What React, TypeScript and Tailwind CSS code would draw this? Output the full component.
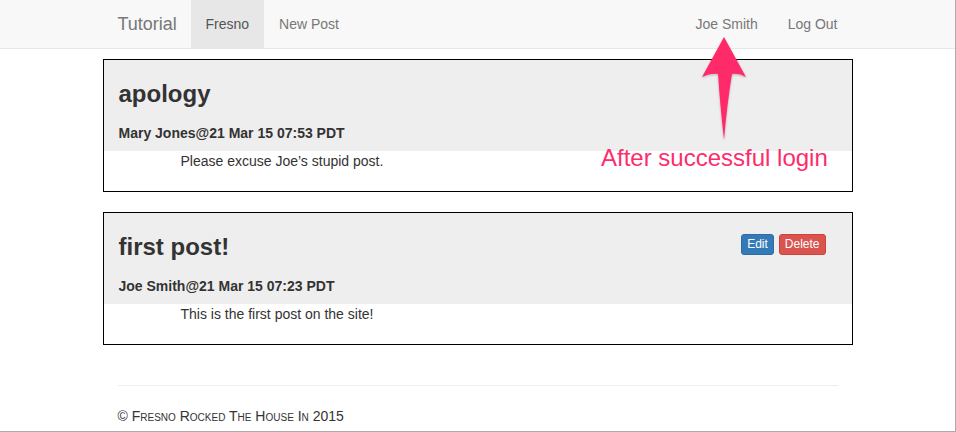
import React from "react";

const font = "font-['Liberation_Sans','Helvetica_Neue',Arial,sans-serif]";

function Navbar() {
  return (
    <div className="bg-[#f8f8f8] border-b border-[#e7e7e7] h-[49px]" data-name="Navbar">
      <div className="w-[750px] mx-auto flex h-[48px] items-stretch text-[14px] text-[#777]">
        <div className="w-[88px] pl-[15px] flex items-center text-[18px] text-[#777]">Tutorial</div>
        <div className="px-[15px] flex items-center bg-[#e7e7e7] text-[#555]">Fresno</div>
        <div className="px-[15px] flex items-center">New Post</div>
        <div className="ml-auto flex items-stretch">
          <div className="px-[15px] flex items-center">Joe Smith</div>
          <div className="px-[15px] flex items-center">Log Out</div>
        </div>
      </div>
    </div>
  );
}

type PostProps = {
  title: string;
  meta: string;
  body: string;
  actions?: boolean;
};

function Post({ title, meta, body, actions }: PostProps) {
  return (
    <div className="border border-black" data-name="Post">
      <div className="bg-[#eee] px-[15px] pt-[20px] pb-[8px]">
        <div className="flex items-start justify-between">
          <h2 className="text-[24px] leading-[28px] font-bold text-[#333]">{title}</h2>
          {actions && (
            <div className="flex gap-[5px] mt-[1px] mr-[11px]">
              <button className="h-[21px] px-[5px] rounded-[3px] bg-[#337ab7] border border-[#2e6da4] text-white text-[12px] leading-[19px]">Edit</button>
              <button className="h-[21px] px-[5px] rounded-[3px] bg-[#d9534f] border border-[#d43f3a] text-white text-[12px] leading-[19px]">Delete</button>
            </div>
          )}
        </div>
        <div className="mt-[15px] text-[14px] leading-[20px] font-bold text-[#333]">{meta}</div>
      </div>
      <div className="pl-[77px] pb-[20px] text-[14px] leading-[20px] text-[#333]">{body}</div>
    </div>
  );
}

function Arrow() {
  return (
    <svg className="absolute left-0 top-0 pointer-events-none" width="956" height="432" viewBox="0 0 956 432">
      <defs>
        <filter id="sh" x="-50%" y="-50%" width="200%" height="200%">
          <feDropShadow dx="0" dy="1" stdDeviation="1" floodColor="#000" floodOpacity="0.25" />
        </filter>
      </defs>
      <path
        d="M724,37 L746,77 Q739,73 732,74 Q727,105 724,140 Q720,105 718,74 Q710,73 702,77 Z"
        fill="#fe2c6b"
        filter="url(#sh)"
      />
    </svg>
  );
}

export default function App() {
  return (
    <div className={`relative h-[432px] overflow-hidden bg-white border-r border-b border-[#ababab] ${font}`}>
      <Navbar />
      <div className="w-[750px] mx-auto mt-[10px] flex flex-col gap-[20px]">
        <Post title="apology" meta="Mary Jones@21 Mar 15 07:53 PDT" body="Please excuse Joe’s stupid post." />
        <Post title="first post!" meta="Joe Smith@21 Mar 15 07:23 PDT" body="This is the first post on the site!" actions />
      </div>
      <div className="w-[720px] mx-auto mt-[40px] border-t border-[#eee] pt-[20px] text-[14px] leading-[20px] text-[#333] [font-variant:small-caps]">
        © Fresno Rocked The House In 2015
      </div>
      <div className="absolute left-[601px] top-[144px] text-[24px] leading-[28px] text-[#fe2c6b]">After successful login</div>
      <Arrow />
    </div>
  );
}
